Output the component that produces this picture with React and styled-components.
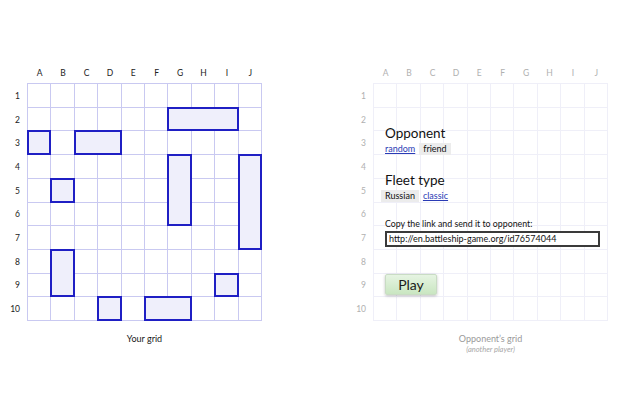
import React from 'react';
import styled, { createGlobalStyle } from 'styled-components';

const GlobalStyle = createGlobalStyle`
  body {
    margin: 0;
    background: #ffffff;
    font-family: Lato, 'Noto Sans', sans-serif;
  }
`;

const LETTERS = ['A', 'B', 'C', 'D', 'E', 'F', 'G', 'H', 'I', 'J'];
const NUMBERS = [1, 2, 3, 4, 5, 6, 7, 8, 9, 10];

// col, row (1-based), width, height in cells
const SHIPS = [
  { c: 1, r: 3, w: 1, h: 1 },
  { c: 3, r: 3, w: 2, h: 1 },
  { c: 7, r: 2, w: 3, h: 1 },
  { c: 2, r: 5, w: 1, h: 1 },
  { c: 7, r: 4, w: 1, h: 3 },
  { c: 10, r: 4, w: 1, h: 4 },
  { c: 2, r: 8, w: 1, h: 2 },
  { c: 9, r: 9, w: 1, h: 1 },
  { c: 4, r: 10, w: 1, h: 1 },
  { c: 6, r: 10, w: 2, h: 1 },
];

const Page = styled.div`
  width: 620px;
  height: 420px;
  padding-top: 62px;
  box-sizing: border-box;
  display: flex;
  gap: 84px;
`;

const Board = styled.div`
  display: flex;
  flex-direction: column;
`;

const BoardGrid = styled.div`
  display: grid;
  grid-template-columns: 27px 235px;
  grid-template-rows: 21px 238px;
`;

const Letters = styled.div`
  grid-column: 2;
  grid-row: 1;
  display: grid;
  grid-template-columns: repeat(10, 1fr);
  padding-left: 1px;
  align-items: center;
  font-size: 8.5px;
  color: ${(p) => (p.$muted ? '#b0b0b0' : '#222')};

  & > span {
    text-align: center;
  }
`;

const Numbers = styled.div`
  grid-column: 1;
  grid-row: 2;
  display: grid;
  grid-template-rows: repeat(10, 1fr);
  padding-top: 1px;
  align-items: center;
  font-size: 8.5px;
  color: ${(p) => (p.$muted ? '#b0b0b0' : '#222')};

  & > span {
    text-align: right;
    padding-right: 7px;
  }
`;

const Field = styled.div`
  grid-column: 2;
  grid-row: 2;
  position: relative;
  display: grid;
  grid-template-columns: repeat(10, 1fr);
  grid-template-rows: repeat(10, 1fr);
  border-left: 1px solid ${(p) => (p.$muted ? '#efeff8' : '#c9c9f1')};
  border-top: 1px solid ${(p) => (p.$muted ? '#efeff8' : '#c9c9f1')};
`;

const Cell = styled.div`
  grid-column: ${(p) => p.$c};
  grid-row: ${(p) => p.$r};
  border-right: 1px solid ${(p) => (p.$muted ? '#efeff8' : '#c9c9f1')};
  border-bottom: 1px solid ${(p) => (p.$muted ? '#efeff8' : '#c9c9f1')};
`;

const Ship = styled.div`
  grid-column: ${(p) => `${p.$c} / span ${p.$w}`};
  grid-row: ${(p) => `${p.$r} / span ${p.$h}`};
  margin: -1px 0 0 -1px;
  border: 2px solid #1f1fc4;
  background: #efeffb;
  box-sizing: border-box;
  z-index: 1;
`;

const Caption = styled.div`
  margin-top: 12px;
  padding-left: 27px;
  text-align: center;
  font-size: 9px;
  line-height: 12px;
  color: ${(p) => (p.$muted ? '#9a9a9a' : '#1a1a1a')};
`;

const SubCaption = styled.div`
  padding-left: 27px;
  text-align: center;
  font-size: 7.5px;
  line-height: 10px;
  font-style: italic;
  color: #a8a8a8;
`;

const Setup = styled.div`
  position: absolute;
  left: 11px;
  top: 41px;
  right: 6px;
  display: flex;
  flex-direction: column;
  align-items: flex-start;
  z-index: 2;
  color: #111;
`;

const Heading = styled.div`
  font-size: 13.5px;
  line-height: 16px;
  margin-top: ${(p) => p.$top || 0}px;
`;

const Options = styled.div`
  display: flex;
  align-items: center;
  gap: 4px;
  margin-top: 2px;
  margin-left: ${(p) => (p.$shift ? -4 : 0)}px;
  font-size: 9px;
  line-height: 12px;
`;

const Link = styled.a`
  color: #2a3bb5;
  text-decoration: underline;
`;

const Chosen = styled.span`
  background: #ececec;
  padding: 0 4px;
`;

const Hint = styled.div`
  margin-top: 16px;
  font-size: 8.8px;
  line-height: 12px;
`;

const LinkBox = styled.div`
  margin-top: 1px;
  width: 215px;
  height: 16px;
  box-sizing: border-box;
  border: 2px solid #3a3a3a;
  padding: 0 2px;
  font-size: 9px;
  line-height: 12px;
  background: #fff;
`;

const PlayButton = styled.button`
  margin-top: 27px;
  width: 52px;
  height: 21px;
  padding: 0;
  border: 1px solid #c9dcc4;
  border-radius: 2px;
  background: linear-gradient(#e6f4e2, #c9e6c1);
  box-shadow: 0 1px 3px rgba(0, 0, 0, 0.25);
  font-family: inherit;
  font-size: 14px;
  color: #1a1a1a;
`;

const Grid = ({ muted, ships, children }) => (
  <BoardGrid>
    <Letters $muted={muted}>
      {LETTERS.map((l) => (
        <span key={l}>{l}</span>
      ))}
    </Letters>
    <Numbers $muted={muted}>
      {NUMBERS.map((n) => (
        <span key={n}>{n}</span>
      ))}
    </Numbers>
    <Field $muted={muted}>
      {NUMBERS.map((r) =>
        NUMBERS.map((c) => <Cell key={`${r}-${c}`} $r={r} $c={c} $muted={muted} />)
      )}
      {ships.map((s, i) => (
        <Ship key={i} $c={s.c} $r={s.r} $w={s.w} $h={s.h} />
      ))}
      {children}
    </Field>
  </BoardGrid>
);

const App = () => {
  return (
    <>
      <GlobalStyle />
      <Page>
        <Board>
          <Grid ships={SHIPS} />
          <Caption>Your grid</Caption>
        </Board>
        <Board>
          <Grid muted ships={[]}>
            <Setup>
              <Heading>Opponent</Heading>
              <Options>
                <Link>random</Link>
                <Chosen>friend</Chosen>
              </Options>
              <Heading $top={17}>Fleet type</Heading>
              <Options $shift>
                <Chosen>Russian</Chosen>
                <Link>classic</Link>
              </Options>
              <Hint>Copy the link and send it to opponent:</Hint>
              <LinkBox>http://en.battleship-game.org/id76574044</LinkBox>
              <PlayButton>Play</PlayButton>
            </Setup>
          </Grid>
          <Caption $muted>Opponent’s grid</Caption>
          <SubCaption>(another player)</SubCaption>
        </Board>
      </Page>
    </>
  );
};

export default App;
